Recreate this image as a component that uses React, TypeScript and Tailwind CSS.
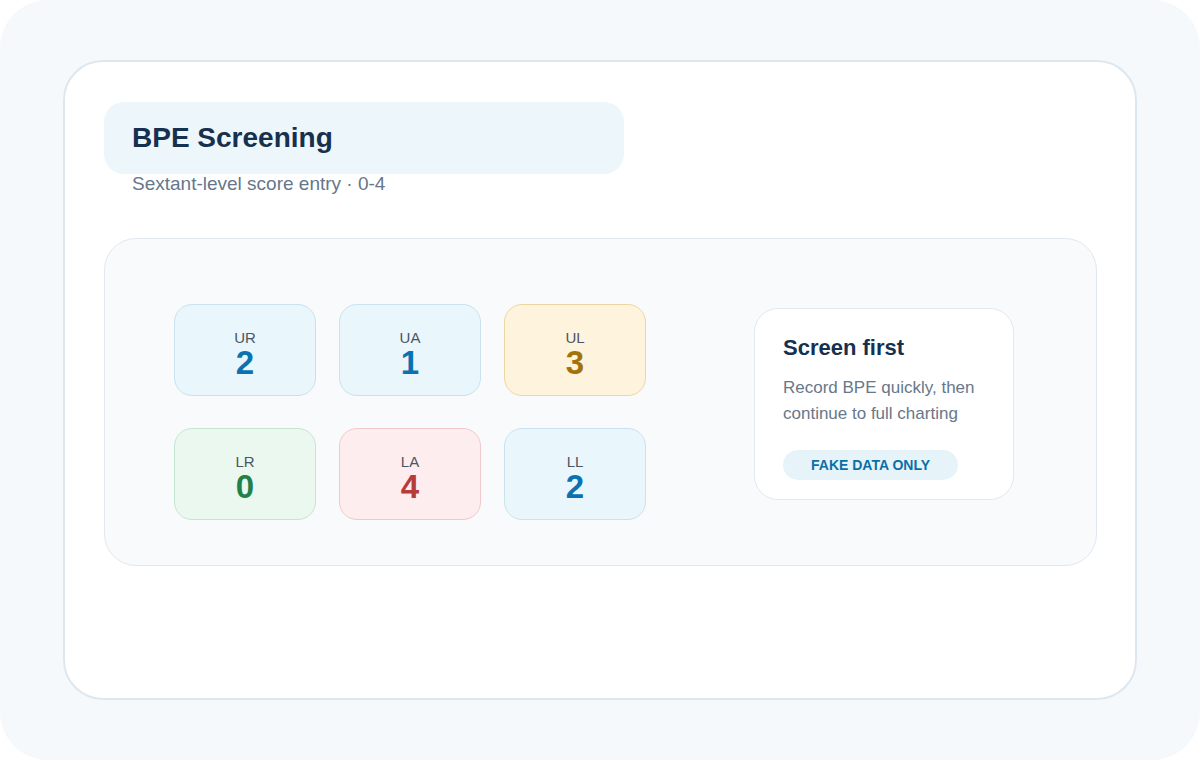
import React from "react";

type Tone = "blue" | "amber" | "green" | "red";

const tones: Record<Tone, { box: string; num: string }> = {
  blue: { box: "bg-[#e9f6fc] border-[#c9e2ee]", num: "text-[#0b72b1]" },
  amber: { box: "bg-[#fef3dc] border-[#eed6a2]", num: "text-[#a2720b]" },
  green: { box: "bg-[#eaf8ef] border-[#c6e6d1]", num: "text-[#22814b]" },
  red: { box: "bg-[#feedee] border-[#f3c8cb]", num: "text-[#b63b3b]" },
};

const sextants: { label: string; score: number; tone: Tone }[] = [
  { label: "UR", score: 2, tone: "blue" },
  { label: "UA", score: 1, tone: "blue" },
  { label: "UL", score: 3, tone: "amber" },
  { label: "LR", score: 0, tone: "green" },
  { label: "LA", score: 4, tone: "red" },
  { label: "LL", score: 2, tone: "blue" },
];

function SextantTile({ label, score, tone }: { label: string; score: number; tone: Tone }) {
  const t = tones[tone];
  return (
    <div className={`flex h-[92px] w-[142px] flex-col items-center rounded-[18px] border pt-[25px] ${t.box}`}>
      <span className="text-[15px] leading-[16px] text-[#4b5563]">{label}</span>
      <span className={`text-[33px] font-bold leading-[33px] ${t.num}`}>{score}</span>
    </div>
  );
}

export default function App() {
  return (
    <div className="bg-white" style={{ fontFamily: '"Liberation Sans", Arial, sans-serif' }}>
      <div className="h-[760px] w-[1200px] rounded-[48px] bg-[#f5f9fc] px-[63px] py-[60px]">
        <div className="h-[640px] rounded-[40px] border-2 border-[#dde7f0] bg-white pl-[39px] pr-[38px] pt-[40px]">
          <div className="flex h-[72px] w-[520px] items-center rounded-[20px] bg-[#edf6fb] pl-[28px]">
            <h1 className="text-[28px] font-bold leading-none text-[#15314f]">BPE Screening</h1>
          </div>
          <p className="pl-[28px] text-[19px] leading-[20px] text-[#65778a]">Sextant-level score entry · 0-4</p>

          <div className="mt-[44px] flex h-[328px] items-start rounded-[32px] border border-[#e2e8ef] bg-[#f8fafc] pl-[69px] pt-[65px]">
            <div className="grid grid-cols-[142px_142px_142px] gap-x-[23px] gap-y-[32px]">
              {sextants.map((s) => (
                <SextantTile key={s.label} {...s} />
              ))}
            </div>

            <div className="ml-[108px] mt-[4px] w-[260px] rounded-[24px] border border-[#e4e9ef] bg-white pb-[19px] pl-[28px] pr-[16px] pt-[26px]">
              <h2 className="text-[22px] font-bold leading-[26px] text-[#15314f]">Screen first</h2>
              <p className="mt-[14px] text-[17px] leading-[26px] text-[#687789]">
                Record BPE quickly, then continue to full charting
              </p>
              <span className="mt-[23px] inline-flex h-[30px] items-center rounded-full bg-[#e6f4fa] px-[28px] text-[14px] font-bold text-[#0a6fa8]">
                FAKE DATA ONLY
              </span>
            </div>
          </div>
        </div>
      </div>
    </div>
  );
}
